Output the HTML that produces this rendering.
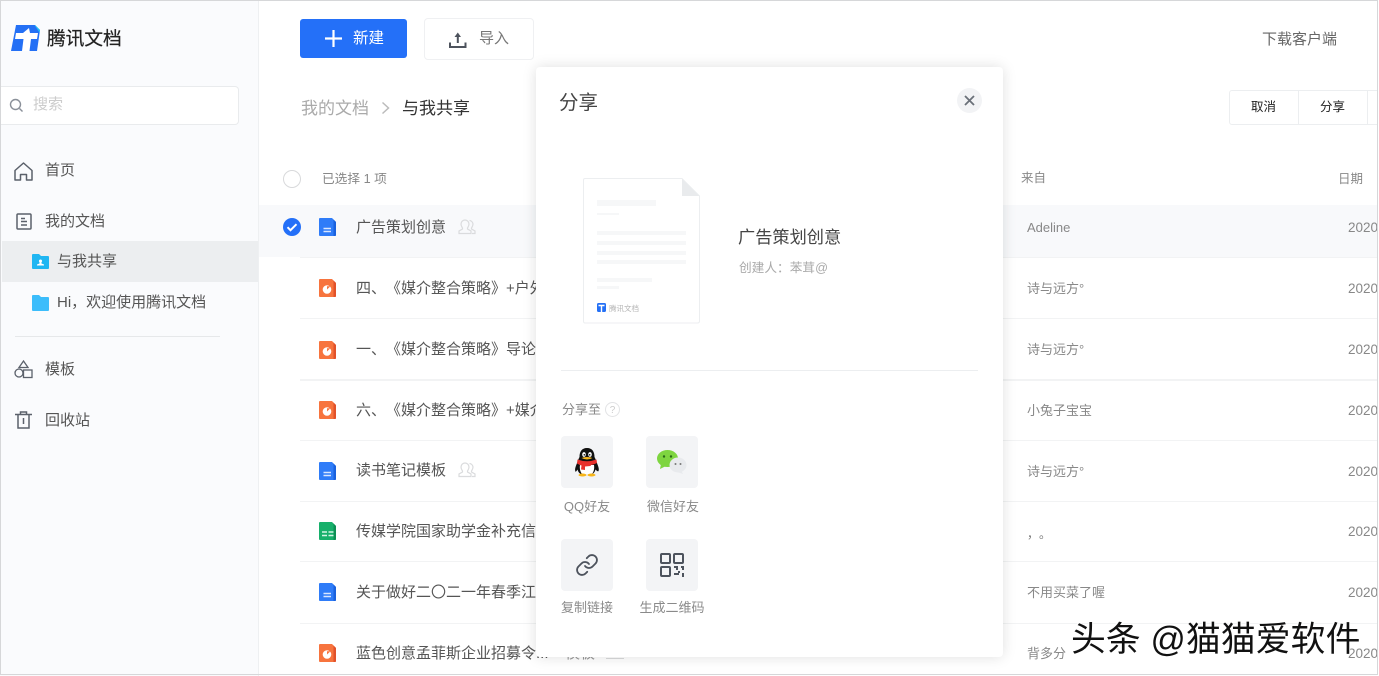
<!DOCTYPE html>
<html lang="zh"><head><meta charset="utf-8"><style>
html,body{margin:0;padding:0;width:1379px;height:676px;overflow:hidden;background:#fff}
body{position:relative;font-family:"Liberation Sans","Noto Sans CJK SC",sans-serif;color:#444;text-spacing-trim:space-all}
#w{position:absolute;left:0;top:0;width:1379px;height:676px;overflow:hidden;filter:blur(.35px)}
.a{position:absolute;white-space:nowrap}
.t{position:absolute;white-space:nowrap;line-height:20px}
svg{position:absolute;overflow:visible}
.sep{position:absolute;left:300px;width:1079px;height:1px;background:#f2f3f4}
.nm{position:absolute;left:356px;font-size:15px;line-height:20px;color:#555;white-space:nowrap}
.fr{position:absolute;left:1027px;font-size:13px;line-height:18px;color:#888;white-space:nowrap}
.dt{position:absolute;left:1348px;font-size:13.500px;line-height:18px;color:#888}
.tile{position:absolute;width:52px;height:52px;background:#f3f4f6;border-radius:4px}
.lb{position:absolute;font-size:13px;line-height:18px;color:#8a8a8a;white-space:nowrap;width:90px;text-align:center}
.nav{position:absolute;left:45px;font-size:15px;line-height:20px;color:#555;white-space:nowrap}
</style></head><body><div id="w">

<!-- sidebar -->
<div class="a" style="left:0;top:0;width:258px;height:676px;background:#fafbfd;border-right:1px solid #eef0f2"></div>
<svg style="left:11px;top:25px" width="29" height="27" viewBox="0 0 29 27"><path d="M5 0H24L29 5 26 26H0Z" fill="#2470f5"/><path d="M23.500 0h.5l5 5-.5 2.500z" fill="#20c4f4"/><path d="M5 8H12L18 3 19 8H27L26 14H20L18.500 26H11L12.500 14H4Z" fill="#fff"/></svg>
<div class="t" style="left:47px;top:29px;font-size:18.700px;color:#222;-webkit-text-stroke:.25px #222">腾讯文档</div>
<div class="a" style="left:1px;top:86px;width:237px;height:37px;background:#fff;border:1px solid #e9ebed;border-left:0;border-radius:0 4px 4px 0"></div>
<svg style="left:9px;top:98px" width="15" height="15" viewBox="0 0 15 15" fill="none" stroke="#8a9099" stroke-width="1.400"><circle cx="6.500" cy="6.500" r="5"/><path d="M10.500 10.500l3 3"/></svg>
<div class="t" style="left:33px;top:95px;font-size:15px;color:#ccc">搜索</div>

<svg style="left:14px;top:162px" width="19" height="19" viewBox="0 0 19 19" fill="none" stroke="#5b616b" stroke-width="1.500" stroke-linejoin="round"><path d="M1 8.500 9.500 1 18 8.500V18H12.500V12.500H6.500V18H1Z"/></svg>
<div class="nav" style="top:161px">首页</div>
<svg style="left:16px;top:213px" width="15" height="17" viewBox="0 0 15 17" fill="none" stroke="#5b616b" stroke-width="1.500"><rect x="1" y="1" width="14" height="15" rx="1"/><path d="M5 5.500h4M5 8.500h6M5 12h6"/></svg>
<div class="nav" style="top:212px">我的文档</div>
<div class="a" style="left:2px;top:241px;width:256px;height:41px;background:#ecEEf0"></div>
<svg style="left:32px;top:254px" width="17" height="15" viewBox="0 0 17 15"><path d="M0 1q0-1 1-1h6l2 2h7q1 0 1 1v11q0 1-1 1H1q-1 0-1-1Z" fill="#20b6f2"/><path d="M8.500 5.500a1.500 1.500 0 0 1 1 2.700v1.300l2.500 1v1H5v-1l2.500-1V8.200a1.500 1.500 0 0 1 1-2.700z" fill="#fff"/></svg>
<div class="nav" style="left:57px;top:252px">与我共享</div>
<svg style="left:32px;top:295px" width="17" height="16" viewBox="0 0 17 16"><path d="M0 1q0-1 1-1h6l2 2h7q1 0 1 1v12q0 1-1 1H1q-1 0-1-1Z" fill="#3cbdfb"/></svg>
<div class="nav" style="left:57px;top:293px">Hi，欢迎使用腾讯文档</div>
<div class="a" style="left:15px;top:336px;width:205px;height:1px;background:#e6e8ea"></div>
<svg style="left:14px;top:360px" width="19" height="18" viewBox="0 0 19 18" fill="none" stroke="#5b616b" stroke-width="1.300"><path d="M9.500 1l4.500 6.500H5Z"/><circle cx="5" cy="13" r="4"/><rect x="9.500" y="10" width="8.500" height="7.500"/></svg>
<div class="nav" style="top:360px">模板</div>
<svg style="left:15px;top:411px" width="17" height="18" viewBox="0 0 17 18" fill="none" stroke="#5b616b" stroke-width="1.500"><path d="M0 3.500h17M5.500 3.500V1h6v2.500M3 3.500V17h11V3.500M8.500 7v6"/></svg>
<div class="nav" style="top:411px">回收站</div>

<!-- top bar -->
<div class="a" style="left:300px;top:19px;width:107px;height:39px;background:#2470f8;border-radius:3px"></div>
<svg style="left:324px;top:29px" width="19" height="19" viewBox="0 0 19 19" stroke="#fff" stroke-width="2.200"><path d="M9.500 1v17M1 9.500h17"/></svg>
<div class="t" style="left:353px;top:29px;font-size:15.500px;color:#fff">新建</div>
<div class="a" style="left:424px;top:18px;width:108px;height:40px;background:#fff;border:1px solid #eff0f2;border-radius:4px"></div>
<svg style="left:449px;top:32px" width="18" height="16" viewBox="0 0 18 16" fill="none" stroke="#4d535d" stroke-width="2"><path d="M1 10.500v4.500h15.500v-4.500"/><path d="M8.800 11V3"/><path d="M5.500 5 8.800 .5 12 5z" fill="#4d535d" stroke="none"/></svg>
<div class="t" style="left:479px;top:29px;font-size:15px;color:#777">导入</div>
<div class="t" style="left:1262px;top:30px;font-size:15px;color:#666">下载客户端</div>

<!-- breadcrumb -->
<div class="t" style="left:301px;top:99px;font-size:17px;color:#aaa">我的文档</div>
<svg style="left:382px;top:102px" width="8" height="12" viewBox="0 0 8 12" fill="none" stroke="#bbb" stroke-width="1.500"><path d="M.5 .5l6 5.500-6 5.500"/></svg>
<div class="t" style="left:402px;top:99px;font-size:17px;color:#333">与我共享</div>

<!-- actions -->
<div class="a" style="left:1229px;top:90px;width:160px;height:33px;border:1px solid #eceef0;border-radius:3px;background:#fff"></div>
<div class="a" style="left:1298px;top:90px;width:1px;height:34px;background:#eceef0"></div>
<div class="a" style="left:1367px;top:90px;width:1px;height:34px;background:#eceef0"></div>
<div class="t" style="left:1251px;top:97px;font-size:12.500px;color:#222">取消</div>
<div class="t" style="left:1320px;top:97px;font-size:12.500px;color:#222">分享</div>

<!-- header -->
<div class="a" style="left:283px;top:170px;width:16px;height:16px;border:1px solid #d8d9db;border-radius:50%"></div>
<div class="t" style="left:322px;top:169px;font-size:12.700px;color:#888">已选择 1 项</div>
<div class="t" style="left:1021px;top:168px;font-size:12.500px;color:#888">来自</div>
<div class="t" style="left:1338px;top:169px;font-size:12.500px;color:#888">日期</div>

<!-- rows -->
<div class="a" style="left:259px;top:205px;width:1120px;height:52px;background:#f8f9fb"></div>
<svg style="left:283px;top:218px" width="18" height="18" viewBox="0 0 18 18"><circle cx="9" cy="9" r="9" fill="#2470f8"/><path d="M4.500 9.200l3 3 6-6" fill="none" stroke="#fff" stroke-width="2"/></svg>

<svg width="0" height="0" style="position:absolute"><defs>
<g id="d"><path d="M1 0h12l4 4v13q0 1-1 1H1q-1 0-1-1V1q0-1 1-1z" fill="#2f7cf8"/><path d="M14.500 1.500L17 4v13q0 1-1 1h-1.500z" fill="#1a62de"/><path d="M4.500 10.500h7.500M4.500 13.500h7.500" stroke="#d8e6ff" stroke-width="1.400"/></g>
<g id="p"><path d="M1 0h12l4 4v13q0 1-1 1H1q-1 0-1-1V1q0-1 1-1z" fill="#f7743e"/><path d="M14.500 1.500L17 4v13q0 1-1 1h-1.500z" fill="#e2522a"/><circle cx="8" cy="10.500" r="4.300" fill="#fff"/><path d="M8 10.500V7.200h3.500z" fill="#f7743e"/></g>
<g id="s"><path d="M1 0h12l4 4v13q0 1-1 1H1q-1 0-1-1V1q0-1 1-1z" fill="#17b06b"/><path d="M14.500 1.500L17 4v13q0 1-1 1h-1.500z" fill="#0d8f55"/><path d="M3 10h5M9.500 10h5M3 13.500h5M9.500 13.500h5" stroke="#d4f4e5" stroke-width="1.500"/></g>
<g id="u" fill="none" stroke="#dadbdd" stroke-width="1.200"><path d="M7 1a4 4 0 0 1 4 4c0 2-1 3-1.500 4v1l3.500 2v2.500H1V12l3.500-2V9C4 8 3 7 3 5a4 4 0 0 1 4-4z"/><path d="M11.500 1.500a4 4 0 0 1 3.500 3.500c0 2-1 3-1.500 4v1l3.500 2v2.500h-3"/></g>
</defs></svg>

<svg style="left:319px;top:218px" width="17" height="18"><use href="#d"/></svg>
<div class="nm" style="top:218px">广告策划创意</div>
<svg style="left:458px;top:219px" width="19" height="15"><use href="#u"/></svg>
<div class="fr" style="top:219px">Adeline</div><div class="dt" style="top:219px">2020</div>
<div class="sep" style="top:257px"></div>

<svg style="left:319px;top:279px" width="17" height="18"><use href="#p"/></svg>
<div class="nm" style="top:279px">四、《媒介整合策略》+户外</div>
<div class="fr" style="top:280px">诗与远方°</div><div class="dt" style="top:280px">2020</div>
<div class="sep" style="top:318px"></div>

<svg style="left:319px;top:341px" width="17" height="18"><use href="#p"/></svg>
<div class="nm" style="top:340px">一、《媒介整合策略》导论</div>
<div class="fr" style="top:341px">诗与远方°</div><div class="dt" style="top:341px">2020</div>
<div class="sep" style="top:379px;height:2px"></div>

<svg style="left:319px;top:401px" width="17" height="18"><use href="#p"/></svg>
<div class="nm" style="top:401px">六、《媒介整合策略》+媒介</div>
<div class="fr" style="top:402px">小兔子宝宝</div><div class="dt" style="top:402px">2020</div>
<div class="sep" style="top:440px"></div>

<svg style="left:319px;top:462px" width="17" height="18"><use href="#d"/></svg>
<div class="nm" style="top:461px">读书笔记模板</div>
<svg style="left:458px;top:462px" width="19" height="15"><use href="#u"/></svg>
<div class="fr" style="top:463px">诗与远方°</div><div class="dt" style="top:463px">2020</div>
<div class="sep" style="top:501px"></div>

<svg style="left:319px;top:522px" width="17" height="18"><use href="#s"/></svg>
<div class="nm" style="top:522px">传媒学院国家助学金补充信息</div>
<div class="fr" style="top:525px;font-size:12px;color:#777">，。</div><div class="dt" style="top:523px">2020</div>
<div class="sep" style="top:561px"></div>

<svg style="left:319px;top:583px" width="17" height="18"><use href="#d"/></svg>
<div class="nm" style="top:583px">关于做好二〇二一年春季江苏</div>
<div class="fr" style="top:584px">不用买菜了喔</div><div class="dt" style="top:584px">2020</div>
<div class="sep" style="top:623px"></div>

<svg style="left:319px;top:644px" width="17" height="18"><use href="#p"/></svg>
<div class="nm" style="top:644px">蓝色创意孟菲斯企业招募令...</div>
<div class="nm" style="left:565px;top:644px;color:#999">模板</div>
<div class="a" style="left:606px;top:658px;width:18px;height:1px;background:#dadbdd"></div>
<div class="fr" style="top:645px">背多分</div><div class="dt" style="top:645px">2020</div>

<!-- modal -->
<div class="a" style="left:536px;top:67px;width:467px;height:590px;background:#fff;border-radius:4px;box-shadow:0 0 14px rgba(0,0,0,.13)"></div>
<div class="t" style="left:559px;top:93px;font-size:19.500px;color:#444">分享</div>
<div class="a" style="left:957px;top:88px;width:25px;height:25px;border-radius:50%;background:#f2f3f5"></div>
<svg style="left:965px;top:96px" width="9" height="9" viewBox="0 0 9 9" stroke="#6a7079" stroke-width="1.800"><path d="M0 0l9 9M9 0L0 9"/></svg>

<svg style="left:583px;top:178px" width="117" height="146" viewBox="0 0 117 146">
<path d="M2 .5H99L116.500 18V143q0 2-2 2H2q-1.500 0-1.500-2V2Q.5 .5 2 .5z" fill="#fff" stroke="#eceef0"/>
<path d="M99 .5L116.500 18H99z" fill="#e9ebed"/>
<g fill="#f6f7f8"><rect x="14" y="22" width="59" height="6"/><rect x="14" y="35" width="22" height="2"/><rect x="14" y="53" width="89" height="4"/><rect x="14" y="63" width="89" height="4"/><rect x="14" y="73" width="89" height="4"/><rect x="14" y="82" width="89" height="4"/><rect x="14" y="100" width="55" height="4"/><rect x="14" y="108" width="22" height="3"/></g>
<rect x="14" y="125" width="9" height="9" rx="1.500" fill="#2470f5"/><path d="M15.500 127.500h6M18.500 127v7" stroke="#fff" stroke-width="1.400"/>
<text x="26" y="133" font-size="7.500" fill="#b5b5b5" font-family="Liberation Sans,Noto Sans CJK SC,sans-serif">腾讯文档</text></svg>

<div class="t" style="left:738px;top:227px;font-size:17.200px;color:#444">广告策划创意</div>
<div class="t" style="left:739px;top:258px;font-size:12.700px;color:#aaa">创建人：苯茸@</div>
<div class="a" style="left:561px;top:370px;width:417px;height:1px;background:#eceef0"></div>

<div class="t" style="left:562px;top:400px;font-size:13px;color:#888">分享至</div>
<svg style="left:605px;top:402px" width="15" height="15" viewBox="0 0 15 15"><circle cx="7.500" cy="7.500" r="7" fill="none" stroke="#e2e3e5"/><text x="7.500" y="11" font-size="10" fill="#ccc" text-anchor="middle" font-family="Liberation Sans,sans-serif">?</text></svg>

<div class="tile" style="left:561px;top:436px"></div>
<svg style="left:575px;top:448px" width="24" height="29" viewBox="0 0 24 29">
<path d="M12 0c5.500 0 7.500 4 7.500 9 1 2 1.500 3 2 5 1.500 3.500 3 7 2 9-.5 1-2-.5-3-1.500-.5 2-1.500 3.500-3 4.500H5.500c-1.500-1-2.500-2.500-3-4.500C1.500 23.500 0 24.500 .3 23c-.8-2 .7-5.500 2.200-9 .5-2 1-3 2-5C4.500 4 6.500 0 12 0z" fill="#111"/>
<path d="M5 17c-.5 3 0 6.500 2 9h10c2-2.500 2.500-6 2-9z" fill="#fff"/>
<path d="M2.500 11.500q9.500 3.500 19 0l.5 3.500q-3 1.500-6 2l-.5 1-5.500 .5 0 3.500-4-.5 .5-4q-2-.5-4.500-2z" fill="#e8302c"/>
<ellipse cx="9" cy="6.500" rx="1.800" ry="2.400" fill="#fff"/><ellipse cx="15" cy="6.500" rx="1.800" ry="2.400" fill="#fff"/>
<circle cx="9.300" cy="6.800" r=".8" fill="#111"/><circle cx="14.700" cy="6.800" r=".8" fill="#111"/>
<path d="M6.500 10q5.500-2 11 0-5.500 3-11 0z" fill="#f7b519"/>
<ellipse cx="7.500" cy="27" rx="4" ry="1.500" fill="#f7b519"/><ellipse cx="16.500" cy="27" rx="4" ry="1.500" fill="#f7b519"/></svg>
<div class="lb" style="left:542px;top:498px">QQ好友</div>

<div class="tile" style="left:646px;top:436px"></div>
<svg style="left:657px;top:450px" width="30" height="25" viewBox="0 0 30 25">
<ellipse cx="10.500" cy="8.500" rx="10.500" ry="8.500" fill="#7ed540"/><path d="M4 14l-1 5 6-3z" fill="#7ed540"/>
<circle cx="7" cy="6.500" r="1.200" fill="#2a6b18"/><circle cx="14" cy="6.500" r="1.200" fill="#2a6b18"/>
<ellipse cx="21" cy="15" rx="8.500" ry="7.500" fill="#e8eaed"/><path d="M24 20l2 4-6-2z" fill="#e8eaed"/>
<circle cx="18.500" cy="14" r="1" fill="#777"/><circle cx="23.500" cy="14" r="1" fill="#777"/></svg>
<div class="lb" style="left:628px;top:498px">微信好友</div>

<div class="tile" style="left:561px;top:539px"></div>
<svg style="left:575px;top:553px" width="24" height="24" viewBox="0 0 24 24" fill="none" stroke="#4d535d" stroke-width="1.800" stroke-linecap="round" stroke-linejoin="round"><path d="M10 13a5 5 0 0 0 7.540.54l3-3a5 5 0 0 0-7.070-7.070l-1.720 1.710"/><path d="M14 11a5 5 0 0 0-7.540-.54l-3 3a5 5 0 0 0 7.070 7.070l1.710-1.710"/></svg>
<div class="lb" style="left:542px;top:599px">复制链接</div>

<div class="tile" style="left:646px;top:539px"></div>
<svg style="left:660px;top:553px" width="24" height="24" viewBox="0 0 24 24" fill="none" stroke="#4d535d" stroke-width="2"><rect x="1" y="1" width="9" height="9" rx="1"/><rect x="14" y="1" width="9" height="9" rx="1"/><rect x="1" y="14" width="9" height="9" rx="1"/><path d="M14 14h3v3M21 14h2v3M14 21h5M19 18v2M23 20v4"/></svg>
<div class="lb" style="left:627px;top:599px">生成二维码</div>

<!-- watermark -->
<div class="t" style="left:1071px;top:621px;font-size:34.800px;line-height:38px;color:#111;text-shadow:1px 1px 0 #fff,-1px -1px 0 #fff;letter-spacing:.1px">头条 @猫猫爱软件</div>

<!-- outer frame -->
<div class="a" style="left:0;top:0;width:1376px;height:673px;border:1px solid #d6d7d9;pointer-events:none"></div>
<div class="a" style="left:1378px;top:0;width:1px;height:676px;background:#fff"></div>
</div></body></html>
